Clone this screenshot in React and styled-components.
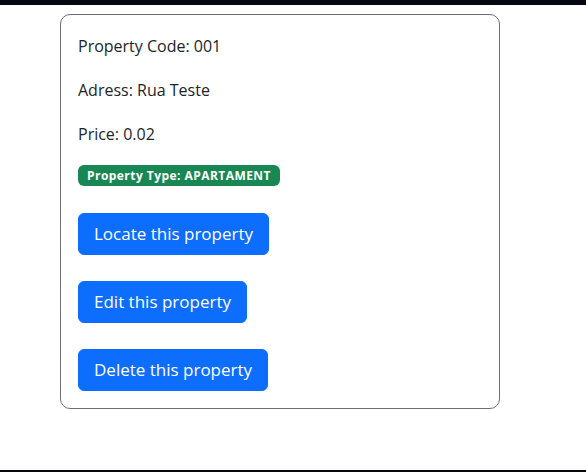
import React from 'react';
import styled, { createGlobalStyle } from 'styled-components';

const GlobalStyle = createGlobalStyle`
  html, body {
    margin: 0;
    padding: 0;
    background: #fff;
  }
  body {
    font-family: "Open Sans", "Noto Sans", sans-serif;
    font-size: 16px;
    color: #212529;
  }
`;

const property = {
  code: '001',
  address: 'Rua Teste',
  price: '0.02',
  type: 'APARTAMENT',
};

function App() {
  return (
    <>
      <GlobalStyle />
      <Page>
        <TopBar />
        <Main>
          <Card>
            <Info>Property Code: {property.code}</Info>
            <Info>Adress: {property.address}</Info>
            <Info>Price: {property.price}</Info>
            <Badge>Property Type: {property.type}</Badge>
            <Actions>
              <ActionButton>Locate this property</ActionButton>
              <ActionButton>Edit this property</ActionButton>
              <ActionButton>Delete this property</ActionButton>
            </Actions>
          </Card>
        </Main>
        <BottomBar />
      </Page>
    </>
  );
}

const Page = styled.div`
  display: flex;
  flex-direction: column;
  height: 472px;
`;

const TopBar = styled.div`
  height: 5px;
  background: #050810;
`;

const Main = styled.main`
  flex: 1;
  padding: 9px 0 0 60px;
`;

const BottomBar = styled.div`
  height: 2px;
  background: #050810;
`;

const Card = styled.div`
  box-sizing: border-box;
  width: 440px;
  border: 1px solid #6c6f73;
  border-radius: 10px;
  padding: 19px 17px 17px;
  display: flex;
  flex-direction: column;
  align-items: flex-start;
`;

const Info = styled.p`
  margin: 0 0 20px;
  line-height: 24px;
`;

const Badge = styled.span`
  display: inline-block;
  margin-top: -1px;
  background: #198754;
  color: #fff;
  font-weight: 700;
  font-size: 12px;
  letter-spacing: 0.45px;
  line-height: 13px;
  padding: 4px 9px;
  border-radius: 6px;
  white-space: nowrap;
`;

const Actions = styled.div`
  display: flex;
  flex-direction: column;
  align-items: flex-start;
  gap: 26px;
  margin-top: 27px;
`;

const ActionButton = styled.button`
  font-family: inherit;
  font-size: 17px;
  line-height: 26px;
  padding: 7px 15px;
  color: #fff;
  background: #0d6efd;
  border: 1px solid #0d6efd;
  border-radius: 6px;
  cursor: pointer;

  &:hover {
    background: #0b5ed7;
  }
`;

export default App;
